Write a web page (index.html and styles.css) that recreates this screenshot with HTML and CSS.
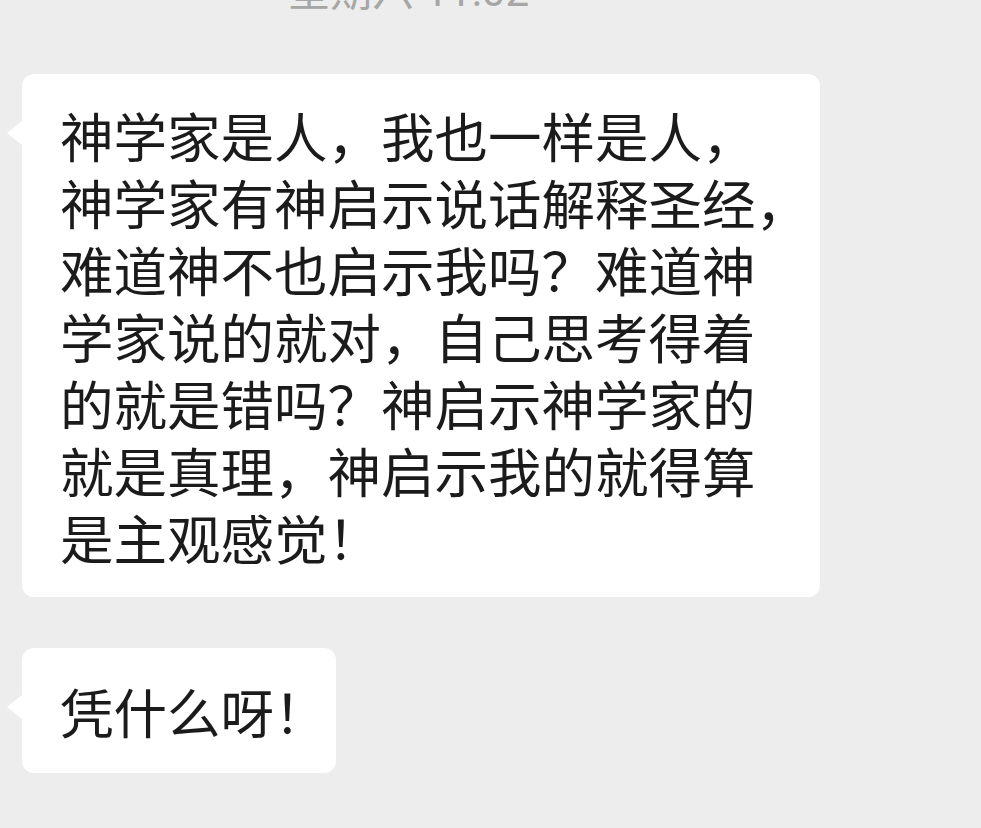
FILE: index.html
```html
<!DOCTYPE html>
<html lang="zh-CN">
<head>
    <meta charset="UTF-8" />
    <title>聊天记录</title>
    <link rel="stylesheet" href="styles.css">
</head>
<body>
    <div class="time">星期六 11:02</div>

    <div class="chat">
        <div class="bubble bubble-long">
            神学家是人，我也一样是人，<br>
            神学家有神启示说话解释圣经，<br>
            难道神不也启示我吗？难道神<br>
            学家说的就对，自己思考得着<br>
            的就是错吗？神启示神学家的<br>
            就是真理，神启示我的就得算<br>
            是主观感觉！
        </div>

        <div class="bubble bubble-short">凭什么呀！</div>
    </div>
</body>
</html>
```

FILE: styles.css
```css
body {
    margin: 0;
    background-color: #ededed;
    font-family: "Noto Sans CJK SC", "Noto Sans", sans-serif;
    color: #1b1b1b;
    overflow: hidden;
}

.time {
    margin-top: -29px;
    height: 42px;
    padding-left: 288px;
    font-family: Roboto, "Noto Sans CJK SC", sans-serif;
    font-size: 42px;
    line-height: 42px;
    color: #a6a6a6;
    white-space: nowrap;
}

.chat {
    display: flex;
    flex-direction: column;
    align-items: flex-start;
    gap: 51px;
    padding: 61px 0 0 22px;
}

.bubble {
    position: relative;
    background-color: #fff;
    border-radius: 12px;
    box-sizing: border-box;
    padding: 27px 0 27px 38px;
    font-size: 53.5px;
    line-height: 67px;
    white-space: nowrap;
}

.bubble::before {
    content: "";
    position: absolute;
    left: -15px;
    top: 47px;
    border-top: 12px solid transparent;
    border-bottom: 12px solid transparent;
    border-right: 15px solid #fff;
}

.bubble-long {
    width: 798px;
}

.bubble-short {
    width: 314px;
    padding-top: 29px;
    padding-bottom: 29px;
}
```
